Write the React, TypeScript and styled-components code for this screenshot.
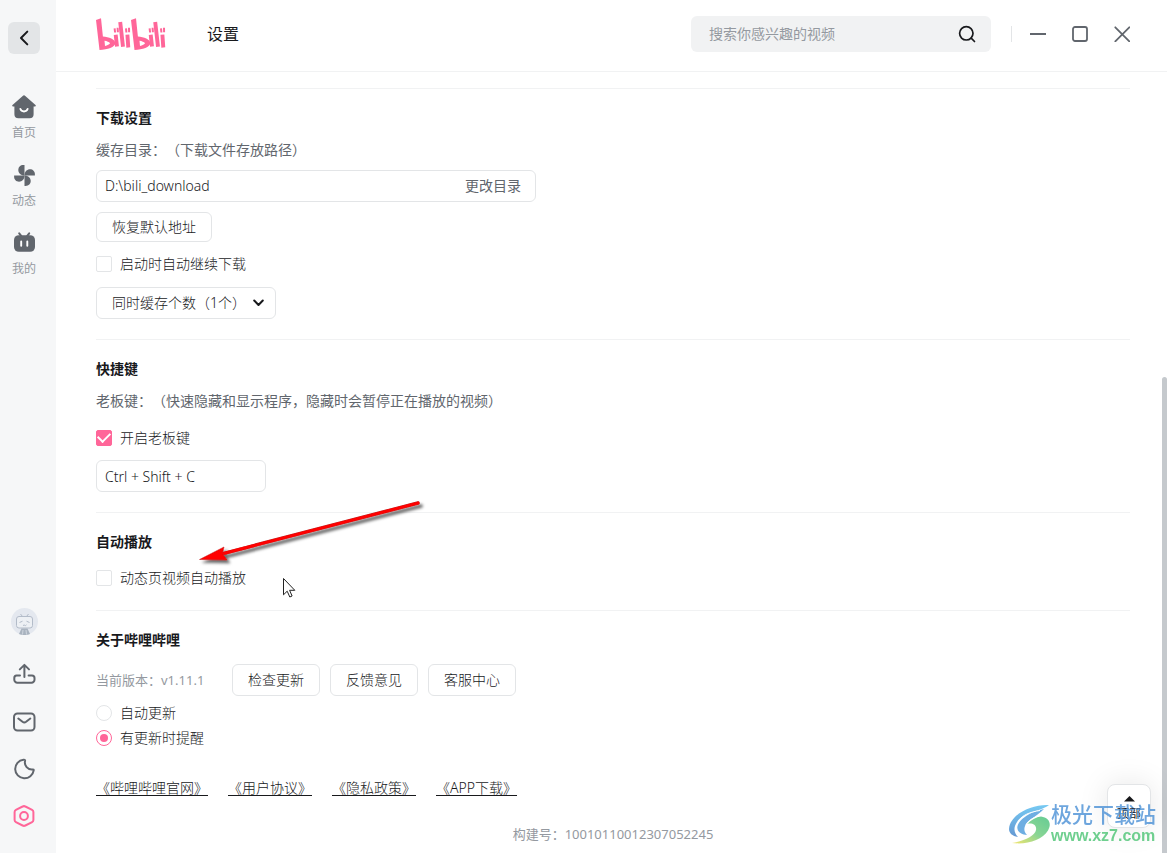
import React, { useState } from 'react';
import styled, { createGlobalStyle } from 'styled-components';

const color = {
  text: '#18191c',
  secondary: '#61666d',
  tertiary: '#9499a0',
  line: '#e3e5e7',
  divider: '#f1f2f3',
  side: '#f6f7f8',
  pink: '#ff6699',
};

const GlobalStyle = createGlobalStyle`
  * { box-sizing: border-box; }
  body {
    margin: 0;
    background: #fff;
    color: ${color.text};
    font: 300 14px/20px "Noto Sans", "Noto Sans CJK SC", sans-serif;
    text-spacing-trim: space-all;
  }
  button, input, select { font: inherit; color: inherit; margin: 0; }
  button { cursor: pointer; }
`;

const Window = styled.div`
  display: flex;
  min-height: 100vh;
  position: relative;
  overflow: hidden;
`;

/* ---------- sidebar ---------- */

const Sidebar = styled.aside`
  flex: 0 0 56px;
  display: flex;
  flex-direction: column;
  justify-content: space-between;
  padding: 22px 8px 25px;
  background: ${color.side};
`;

const SideTop = styled.div`
  display: flex;
  flex-direction: column;
  gap: 41px;
`;

const BackButton = styled.button`
  display: grid;
  place-items: center;
  width: 32px;
  height: 32px;
  padding: 0;
  border: 0;
  border-radius: 6px;
  background: ${color.line};
`;

const Nav = styled.nav`
  display: flex;
  flex-direction: column;
  gap: 22px;
`;

const NavLink = styled.a`
  display: flex;
  flex-direction: column;
  align-items: center;
  gap: 6px;
  width: 32px;
  color: ${color.tertiary};
  font-size: 12px;
  line-height: 16px;
  font-weight: 400;
  text-decoration: none;
  white-space: nowrap;
`;

const SideTools = styled.div`
  display: flex;
  flex-direction: column;
  align-items: center;
  gap: 23px;
  width: 32px;
`;

const IconButton = styled.button<{ $active?: boolean }>`
  display: block;
  padding: 0;
  border: 0;
  background: none;
  color: ${(p) => (p.$active ? color.pink : color.secondary)};
  svg { display: block; }
`;

const AvatarButton = styled(IconButton)`
  margin-bottom: 4px;
`;

/* ---------- header ---------- */

const Main = styled.div`
  flex: 1;
  min-width: 0;
  display: flex;
  flex-direction: column;
`;

const Header = styled.header`
  flex: 0 0 72px;
  display: flex;
  align-items: center;
  padding: 0 37px 4px 40px;
  border-bottom: 1px solid ${color.divider};
`;

const PageTitle = styled.h1`
  flex: 1;
  margin: 0 0 0 41px;
  font-size: 16px;
  line-height: 24px;
  font-weight: 400;
`;

const SearchBox = styled.form`
  display: flex;
  align-items: center;
  width: 300px;
  height: 36px;
  padding: 0 14px 0 18px;
  border-radius: 6px;
  background: ${color.divider};
`;

const SearchInput = styled.input`
  flex: 1;
  min-width: 0;
  padding: 0;
  border: 0;
  outline: 0;
  background: none;
  font-weight: 400;
  &::placeholder { color: ${color.tertiary}; opacity: 1; }
`;

const WindowControls = styled.div`
  display: flex;
  align-items: center;
  gap: 26px;
  margin-left: 20px;
  padding-left: 18px;
  border-left: 1px solid ${color.line};
`;

/* ---------- settings ---------- */

const Body = styled.div`
  flex: 1;
  display: flex;
`;

const Content = styled.main`
  flex: 1;
  min-width: 0;
  padding: 16px 32px 9px 40px;
`;

const ScrollRail = styled.div`
  flex: 0 0 5px;
  display: flex;
  flex-direction: column;
  justify-content: flex-end;
`;

const ScrollThumb = styled.div`
  height: 61%;
  border-radius: 3px 3px 0 0;
  background: #c5c9cd;
`;

const Section = styled.section`
  padding: 19px 0 20px;
  border-top: 1px solid ${color.divider};
`;

const SectionTitle = styled.h2`
  margin: 0 0 12px;
  font-size: 14px;
  line-height: 20px;
  font-weight: 700;
`;

const Hint = styled.p`
  margin: 0 0 10px;
  color: ${color.secondary};
  font-weight: 400;
`;

const PathField = styled.div`
  display: flex;
  align-items: center;
  width: 440px;
  max-width: 100%;
  height: 32px;
  padding: 0 14px 0 8px;
  border: 1px solid ${color.line};
  border-radius: 6px;
`;

const PathInput = styled.input`
  flex: 1;
  min-width: 0;
  padding: 0;
  border: 0;
  outline: 0;
  background: none;
`;

const TextButton = styled.button`
  padding: 0;
  border: 0;
  background: none;
  color: ${color.secondary};
  font-weight: 400;
`;

const KeyInput = styled.input`
  display: block;
  width: 170px;
  height: 32px;
  padding: 0 8px;
  border: 1px solid ${color.line};
  border-radius: 6px;
  background: #fff;
`;

const OutlineButton = styled.button<{ $compact?: boolean }>`
  height: ${(p) => (p.$compact ? 30 : 32)}px;
  padding: 0 15px;
  border: 1px solid ${color.line};
  border-radius: 6px;
  background: #fff;
  white-space: nowrap;
`;

const Row = styled.div<{ $top?: number; $bottom?: number }>`
  display: flex;
  align-items: center;
  gap: 10px;
  margin-top: ${(p) => p.$top ?? 0}px;
  margin-bottom: ${(p) => p.$bottom ?? 0}px;
`;

const Choice = styled.label`
  display: inline-flex;
  align-items: center;
  gap: 8px;
  line-height: 20px;
`;

const CheckInput = styled.input`
  appearance: none;
  width: 16px;
  height: 16px;
  border: 1px solid ${color.line};
  border-radius: 2px;
  background: #fff;
  display: grid;
  place-items: center;
  &:checked { border-color: ${color.pink}; background: ${color.pink}; }
  &:checked::after {
    content: '';
    width: 10px;
    height: 6px;
    border: solid #fff;
    border-width: 0 0 2px 2px;
    transform: translateY(-2px) rotate(-45deg);
  }
`;

const RadioInput = styled.input`
  appearance: none;
  width: 16px;
  height: 16px;
  border: 1px solid ${color.line};
  border-radius: 50%;
  background: #fff;
  display: grid;
  place-items: center;
  &:checked { border-color: ${color.pink}; }
  &:checked::after {
    content: '';
    width: 8px;
    height: 8px;
    border-radius: 50%;
    background: ${color.pink};
  }
`;

const RadioGroup = styled.div`
  display: flex;
  flex-direction: column;
  align-items: flex-start;
  gap: 5px;
  margin-top: 7px;
`;

const SelectBox = styled.div`
  position: relative;
  width: 180px;
  svg {
    position: absolute;
    right: 11px;
    top: 12px;
    pointer-events: none;
  }
`;

const Select = styled.select`
  appearance: none;
  display: block;
  width: 100%;
  height: 32px;
  padding: 0 28px 0 15px;
  border: 1px solid ${color.line};
  border-radius: 6px;
  background: #fff;
`;

const Version = styled.span`
  width: 126px;
  color: ${color.tertiary};
  font-size: 13px;
  font-weight: 400;
`;

const Links = styled.div`
  display: flex;
  gap: 20px;
  margin-top: 30px;
`;

const DocLink = styled.a`
  color: ${color.text};
  text-decoration: underline 1px;
  text-underline-offset: 2px;
`;

const Build = styled.footer`
  margin-top: 6px;
  color: ${color.tertiary};
  font-size: 13px;
  font-weight: 400;
  text-align: center;
`;

/* ---------- floating layers ---------- */

const TopButton = styled.button`
  position: absolute;
  right: 16px;
  bottom: 25px;
  display: flex;
  flex-direction: column;
  align-items: center;
  gap: 4px;
  width: 44px;
  height: 44px;
  padding: 11px 0 0;
  border: 1px solid ${color.line};
  border-radius: 8px;
  background: #fff;
  box-shadow: 0 0 30px rgba(0, 0, 0, 0.1);
  font-size: 12px;
  line-height: 16px;
  font-weight: 400;
`;

const Pointer = styled.svg`
  position: absolute;
  left: 190px;
  top: 490px;
  pointer-events: none;
`;

const Watermark = styled.div`
  position: absolute;
  right: 11px;
  bottom: 9px;
  display: flex;
  align-items: flex-end;
  gap: 1px;
  opacity: 0.8;
  pointer-events: none;
`;

const WatermarkText = styled.div`
  display: flex;
  flex-direction: column;
  gap: 7px;
  line-height: 16px;
  white-space: nowrap;
`;

const WatermarkName = styled.span`
  color: #4a90d6;
  font-family: "Noto Sans CJK SC", sans-serif;
  font-size: 21px;
  font-weight: 500;
`;

const WatermarkUrl = styled.span`
  color: #4cc474;
  font-family: "Liberation Sans", sans-serif;
  font-size: 16px;
  font-weight: 700;
`;

/* ---------- drawings ---------- */

const LogoHalf = () => (
  <>
    <path d="M0 2L5 .3 6.900 18.600C12.800 19 19.300 21.600 19.300 25.200 19.300 29 11.500 31.600 3.500 32ZM8.500 22.700L9 28C11.200 27.400 13.800 26.300 14 25.200 13.300 23.900 10.800 23 8.500 22.700Z" fillRule="evenodd" />
    <path d="M19.700 16.700L21 28.500M24.200 4L27 28.800M31.400 16.700L32.300 29.500" stroke="currentColor" strokeWidth="3.900" />
    <path d="M18.600 10.300L19.100 14.500M21.600 9.800L21.900 14.200M30 10.300L30.400 14.500M33 9.800L33.100 14.200" stroke="currentColor" strokeWidth="2" />
  </>
);

const Logo = () => (
  <svg width="70" height="32" viewBox="0 0 70 32" fill="currentColor" color={color.pink} role="img" aria-label="bilibili">
    <LogoHalf />
    <g transform="translate(35 0)"><LogoHalf /></g>
  </svg>
);

const HomeIcon = () => (
  <svg width="24" height="24" viewBox="0 0 24 24">
    <path d="M10.700.9a2 2 0 0 1 2.600 0L23.500 10c.7.700.3 1.600-.6 1.600h-1.300v7.600a4 4 0 0 1-4 4H6.400a4 4 0 0 1-4-4v-7.600H1.100c-.9 0-1.300-.9-.6-1.600Z" fill={color.secondary} />
    <path d="M8.300 13.800c.6 1.900 2 2.700 3.700 2.700s3.100-.8 3.700-2.700" fill="none" stroke="#fff" strokeWidth="1.800" strokeLinecap="round" />
  </svg>
);

const FanIcon = () => (
  <svg width="24" height="24" viewBox="0 0 24 24" fill={color.secondary}>
    <g transform="translate(.5 .5)">
      {[0, 90, 180, 270].map((r) => (
        <path key={r} transform={`rotate(${r} 12 12)`} d="M12 12V1.600h-1C7.800 1.600 5.800 3.700 5.800 6.500 5.800 9.400 8 12 12 12Z" />
      ))}
    </g>
  </svg>
);

const TvIcon = () => (
  <svg width="24" height="24" viewBox="0 0 24 24">
    <path d="M7.200 2.300l2 2.600M17.200 2.300l-2 2.600" stroke={color.secondary} strokeWidth="2" strokeLinecap="round" />
    <rect x="2" y="4.200" width="21" height="16.600" rx="4.800" fill={color.secondary} />
    <path d="M9.200 10.500v4.200M15.300 10.500v4.200" stroke="#fff" strokeWidth="1.900" strokeLinecap="round" />
  </svg>
);

const Avatar = () => (
  <svg width="28" height="28" viewBox="0 0 28 28" fill="none" stroke="#b3bcc9">
    <circle cx="14.500" cy="13.500" r="13.500" fill="#e4e8ef" stroke="none" />
    <path d="M10.500 6l2 2.500M18.500 6l-2 2.500" />
    <rect x="6.500" y="8.500" width="16" height="11.500" rx="2.500" fill="#edf0f4" />
    <path d="M9.500 14.500l3-1.300M16.500 13.200l3 1.300M13 17l1 .6.800-.6.800.6.900-.8" />
    <path d="M11.500 20.500h6l2.500 5.500c-3 1.400-8 1.400-11 0Z" fill="#a9b3bf" stroke="none" />
    <path d="M13 22L12.500 26.500M16 22L16.500 26.500" stroke="#dfe4eb" strokeWidth=".7" />
  </svg>
);

const lineIcon = {
  width: 24,
  height: 24,
  viewBox: '0 0 24 24',
  fill: 'none',
  stroke: 'currentColor',
  strokeWidth: 2,
  strokeLinecap: 'round' as const,
  strokeLinejoin: 'round' as const,
};

const UploadIcon = () => (
  <svg {...lineIcon}>
    <path d="M12.400 14V2M7.800 6.400l4.600-4.500L17 6.400" />
    <path d="M8 12.400H4.500A2.500 2.500 0 0 0 2.300 14.900v1.800a3 3 0 0 0 3 3h14.200a3 3 0 0 0 3-3v-1.800a2.500 2.500 0 0 0-2.500-2.500h-3.400" />
  </svg>
);

const MailIcon = () => (
  <svg {...lineIcon}>
    <rect x="2" y="3.500" width="20.500" height="17" rx="3.500" />
    <path d="M6.300 8.500l4.200 3.300a3 3 0 0 0 3.600 0l4.200-3.300" />
  </svg>
);

const MoonIcon = () => (
  <svg {...lineIcon}>
    <path d="M11.500 2.700a9.300 9.300 0 1 0 10.200 10.600c.1-.7-.4-1-1-.9a7 7 0 0 1-7.600-8.700c.1-.7-.8-1.100-1.600-1Z" />
  </svg>
);

const SettingIcon = () => (
  <svg {...lineIcon}>
    <path d="M10.600 2.500a3 3 0 0 1 2.800 0l6.700 3.300a2.400 2.400 0 0 1 1.300 2.100v8.200a2.400 2.400 0 0 1-1.300 2.100l-6.700 3.300a3 3 0 0 1-2.800 0l-6.700-3.300a2.400 2.400 0 0 1-1.300-2.100V7.900a2.400 2.400 0 0 1 1.300-2.100Z" />
    <circle cx="12" cy="12" r="3.900" />
  </svg>
);

const WatermarkLogo = () => (
  <svg width="42" height="40" viewBox="0 0 42 40">
    <defs>
      <linearGradient id="sky" x1="0" y1="0" x2="0" y2="1">
        <stop offset="0" stopColor="#55bdf0" />
        <stop offset="1" stopColor="#3f7fc8" />
      </linearGradient>
      <linearGradient id="leaf" x1="1" y1="0" x2="0" y2="1">
        <stop offset="0" stopColor="#3fc07a" />
        <stop offset=".5" stopColor="#6ccb7a" />
        <stop offset="1" stopColor="#f3e04a" />
      </linearGradient>
    </defs>
    <path d="M41 1C24 0 2 10 1 25c0 4 3 7 9 8-4-4-5-9-1-15C15 8 32 8 41 1Z" fill="url(#sky)" />
    <path d="M36 5C21 8 8 17 9.500 25c1 4 5 5.500 9.500 6-3-3-3.500-7-1-11 3-5 10-7 18-15Z" fill="#4a9bdc" />
    <path d="M19 20c4-4 9-7 14-7.500 8 1 11 7 7 14C34 36 19 41 4 39c12-2 23-7 24-13 1-5-4-7.500-9-6Z" fill="url(#leaf)" />
    <path d="M11 17C14 11 22 8 32 6.500M18 21c2-4 7-7.500 13-9" fill="none" stroke="#fff" strokeWidth="1" />
  </svg>
);

export default function App() {
  const [path, setPath] = useState('D:\\bili_download');
  const [resume, setResume] = useState(false);
  const [boss, setBoss] = useState(true);
  const [autoplay, setAutoplay] = useState(false);
  const [update, setUpdate] = useState('remind');

  return (
    <Window>
      <GlobalStyle />
      <Sidebar>
        <SideTop>
          <BackButton aria-label="返回">
            <svg width="24" height="24" viewBox="0 0 24 24" fill="none" stroke={color.text} strokeWidth="2" strokeLinecap="round" strokeLinejoin="round">
              <path d="M15.300 5.600L9 12l6.300 6.400" />
            </svg>
          </BackButton>
          <Nav>
            <NavLink href="#home"><HomeIcon />首页</NavLink>
            <NavLink href="#dynamic"><FanIcon />动态</NavLink>
            <NavLink href="#mine"><TvIcon />我的</NavLink>
          </Nav>
        </SideTop>
        <SideTools>
          <AvatarButton aria-label="头像"><Avatar /></AvatarButton>
          <IconButton aria-label="投稿"><UploadIcon /></IconButton>
          <IconButton aria-label="消息"><MailIcon /></IconButton>
          <IconButton aria-label="主题"><MoonIcon /></IconButton>
          <IconButton aria-label="设置" $active><SettingIcon /></IconButton>
        </SideTools>
      </Sidebar>

      <Main>
        <Header>
          <Logo />
          <PageTitle>设置</PageTitle>
          <SearchBox onSubmit={(e) => e.preventDefault()}>
            <SearchInput aria-label="搜索" placeholder="搜索你感兴趣的视频" />
            <IconButton type="submit" aria-label="搜索">
              <svg width="20" height="20" viewBox="0 0 20 20" fill="none" stroke={color.text} strokeWidth="1.700" strokeLinecap="round">
                <circle cx="9.300" cy="9.300" r="6.700" />
                <path d="M14.200 14.200L17.500 17.500" />
              </svg>
            </IconButton>
          </SearchBox>
          <WindowControls>
            <IconButton aria-label="最小化">
              <svg width="16" height="16" viewBox="0 0 16 16"><path d="M0 8h16" stroke="currentColor" strokeWidth="2" /></svg>
            </IconButton>
            <IconButton aria-label="最大化">
              <svg width="16" height="16" viewBox="0 0 16 16"><rect x="1" y="1" width="14" height="14" rx="2" fill="none" stroke="currentColor" strokeWidth="1.800" /></svg>
            </IconButton>
            <IconButton aria-label="关闭">
              <svg width="16" height="16" viewBox="0 0 16 16"><path d="M1.300 1.300l14 14M15.300 1.300l-14 14" stroke="currentColor" strokeWidth="1.800" strokeLinecap="round" /></svg>
            </IconButton>
          </WindowControls>
        </Header>

        <Body>
          <Content>
            <Section>
              <SectionTitle>下载设置</SectionTitle>
              <Hint>缓存目录：（下载文件存放路径）</Hint>
              <PathField>
                <PathInput aria-label="缓存目录" value={path} onChange={(e) => setPath(e.target.value)} />
                <TextButton>更改目录</TextButton>
              </PathField>
              <Row $top={10}>
                <OutlineButton $compact>恢复默认地址</OutlineButton>
              </Row>
              <Row $top={12}>
                <Choice>
                  <CheckInput type="checkbox" checked={resume} onChange={() => setResume(!resume)} />
                  启动时自动继续下载
                </Choice>
              </Row>
              <Row $top={13}>
                <SelectBox>
                  <Select aria-label="同时缓存个数" defaultValue="1">
                    <option value="1">同时缓存个数（1个）</option>
                    <option value="2">同时缓存个数（2个）</option>
                    <option value="3">同时缓存个数（3个）</option>
                  </Select>
                  <svg width="12" height="8" viewBox="0 0 12 8" fill="none" stroke={color.text} strokeWidth="2" strokeLinecap="round" strokeLinejoin="round">
                    <path d="M1.200 1.500L5.500 6l4.300-4.500" />
                  </svg>
                </SelectBox>
              </Row>
            </Section>

            <Section>
              <SectionTitle>快捷键</SectionTitle>
              <Hint>老板键：（快速隐藏和显示程序，隐藏时会暂停正在播放的视频）</Hint>
              <Row $top={17}>
                <Choice>
                  <CheckInput type="checkbox" checked={boss} onChange={() => setBoss(!boss)} />
                  开启老板键
                </Choice>
              </Row>
              <Row $top={12}>
                <KeyInput aria-label="老板键" value="Ctrl + Shift + C" readOnly />
              </Row>
            </Section>

            <Section>
              <SectionTitle>自动播放</SectionTitle>
              <Row $top={16} $bottom={2}>
                <Choice>
                  <CheckInput type="checkbox" checked={autoplay} onChange={() => setAutoplay(!autoplay)} />
                  动态页视频自动播放
                </Choice>
              </Row>
            </Section>

            <Section>
              <SectionTitle>关于哔哩哔哩</SectionTitle>
              <Row $top={14}>
                <Version>当前版本：v1.11.1</Version>
                <OutlineButton>检查更新</OutlineButton>
                <OutlineButton>反馈意见</OutlineButton>
                <OutlineButton>客服中心</OutlineButton>
              </Row>
              <RadioGroup role="radiogroup" aria-label="更新方式">
                <Choice>
                  <RadioInput type="radio" name="update" checked={update === 'auto'} onChange={() => setUpdate('auto')} />
                  自动更新
                </Choice>
                <Choice>
                  <RadioInput type="radio" name="update" checked={update === 'remind'} onChange={() => setUpdate('remind')} />
                  有更新时提醒
                </Choice>
              </RadioGroup>
              <Links>
                <DocLink href="#site">《哔哩哔哩官网》</DocLink>
                <DocLink href="#terms">《用户协议》</DocLink>
                <DocLink href="#privacy">《隐私政策》</DocLink>
                <DocLink href="#app">《APP下载》</DocLink>
              </Links>
            </Section>
            <Build>构建号：10010110012307052245</Build>
          </Content>
          <ScrollRail><ScrollThumb /></ScrollRail>
        </Body>
      </Main>

      <TopButton>
        <svg width="11" height="6" viewBox="0 0 11 6"><path d="M5.500 0L11 5.500H0Z" fill={color.text} /></svg>
        顶部
      </TopButton>

      <Pointer width="250" height="120" viewBox="190 490 250 120">
        <defs>
          <filter id="drop" x="-10%" y="-30%" width="120%" height="180%">
            <feDropShadow dx="3" dy="3" stdDeviation="1.800" floodColor="#000" floodOpacity=".6" />
          </filter>
        </defs>
        <g filter="url(#drop)">
          <path d="M222 553.800L418 503" stroke="#c01010" strokeWidth="3.400" strokeLinecap="round" />
          <path d="M222 553.800L418 503" stroke="#ff0505" strokeWidth="2.800" strokeLinecap="round" />
          <path d="M199.500 559.500L224 547 222.500 553.500 227 560Z" fill="#ff0505" stroke="#c01010" strokeWidth=".5" />
        </g>
        <path d="M283.500 578.500v16.300l3.700-3.600 2.600 5.800 2.300-1-2.500-5.700h5.200Z" fill="#fff" stroke="#222" />
      </Pointer>

      <Watermark>
        <WatermarkLogo />
        <WatermarkText>
          <WatermarkName>极光下载站</WatermarkName>
          <WatermarkUrl>www.xz7.com</WatermarkUrl>
        </WatermarkText>
      </Watermark>
    </Window>
  );
}
